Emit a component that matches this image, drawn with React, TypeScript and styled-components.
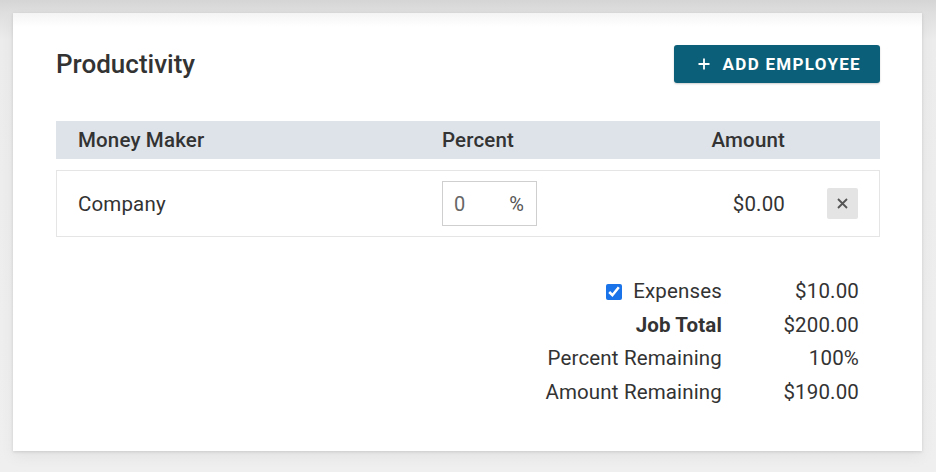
import React from "react";
import styled, { createGlobalStyle } from "styled-components";

const Global = createGlobalStyle`
  html, body { margin: 0; padding: 0; }
  body {
    font-family: Roboto, "Noto Sans", "Liberation Sans", sans-serif;
    background: linear-gradient(#d5d5d5 0px, #dedede 12px, #ececec 40px, #efefef 100%);
    min-height: 472px;
    color: #333;
  }
`;

const Page = styled.div`
  padding: 13px 14px 21px 13px;
`;

const Card = styled.section`
  background: #fff;
  box-shadow: 0 1px 3px rgba(0, 0, 0, 0.12), 0 6px 14px rgba(0, 0, 0, 0.05);
  padding: 32px 42px 42px 43px;
  height: 438px;
  box-sizing: border-box;
  background-image: linear-gradient(#f4f4f4 0px, #fff 14px);
`;

const TopBar = styled.div`
  display: flex;
  align-items: center;
  justify-content: space-between;
  height: 38px;
`;

const Title = styled.h2`
  margin: 0;
  font-size: 26px;
  font-weight: 500;
  color: #333;
`;

const AddButton = styled.button`
  display: flex;
  align-items: center;
  gap: 13px;
  height: 38px;
  padding: 0 19px 0 24px;
  border: none;
  border-radius: 3px;
  background: #0c5f78;
  color: #fff;
  font-family: Roboto, "Liberation Sans", sans-serif;
  font-size: 17px;
  font-weight: 700;
  letter-spacing: 1.3px;
  box-shadow: 0 1px 2px rgba(0, 0, 0, 0.2);
`;

const Grid = styled.div<{ $head?: boolean }>`
  display: grid;
  grid-template-columns: 364px 223px 120px 31px;
  column-gap: 0;
  align-items: center;
  ${(p) =>
    p.$head
      ? `
    margin-top: 38px;
    height: 38px;
    padding: 0 22px;
    background: #dee3ea;
    font-weight: 500;
  `
      : `
    margin-top: 11px;
    height: 67px;
    box-sizing: border-box;
    padding: 0 21px;
    border: 1px solid #e5e5e5;
  `}
  font-size: 20.5px;
  letter-spacing: 0.15px;
  & > :nth-child(4) { margin-left: 42px; }
`;

const Cell = styled.div<{ $right?: boolean }>`
  text-align: ${(p) => (p.$right ? "right" : "left")};
  white-space: nowrap;
`;

const PercentBox = styled.label`
  display: flex;
  align-items: center;
  justify-content: space-between;
  width: 95px;
  height: 45px;
  box-sizing: border-box;
  border: 1px solid #cfcfcf;
  padding: 0 12px 0 11px;
  font-size: 20px;
  color: #555;
`;

const PercentInput = styled.input`
  width: 40px;
  border: none;
  outline: none;
  padding: 0;
  font: inherit;
  color: #666;
  background: transparent;
`;

const RemoveButton = styled.button`
  width: 31px;
  height: 31px;
  border: none;
  border-radius: 2px;
  background: #e4e4e4;
  display: flex;
  align-items: center;
  justify-content: center;
  padding: 0;
`;

const Summary = styled.div`
  margin-top: 38px;
  display: grid;
  grid-template-columns: auto 137px;
  justify-content: end;
  padding-right: 21px;
  font-size: 20.5px;
  letter-spacing: 0.15px;
  line-height: 33.7px;
`;

const Label = styled.div<{ $bold?: boolean }>`
  display: flex;
  align-items: center;
  justify-content: flex-end;
  gap: 11px;
  font-weight: ${(p) => (p.$bold ? 700 : 400)};
`;

const Value = styled.div`
  text-align: right;
`;

const Check = styled.input`
  width: 16px;
  height: 16px;
  margin: 0;
  accent-color: #1a73e8;
`;

export default function App() {
  return (
    <>
      <Global />
      <Page>
        <Card>
          <TopBar>
            <Title>Productivity</Title>
            <AddButton>
              <svg width="12" height="12" viewBox="0 0 12 12">
                <path d="M6 0.5v11M0.5 6h11" stroke="#fff" strokeWidth="1.8" />
              </svg>
              ADD EMPLOYEE
            </AddButton>
          </TopBar>
          <Grid $head>
            <Cell>Money Maker</Cell>
            <Cell>Percent</Cell>
            <Cell $right>Amount</Cell>
            <Cell />
          </Grid>
          <Grid>
            <Cell>Company</Cell>
            <Cell>
              <PercentBox>
                <PercentInput defaultValue="0" />
                <span>%</span>
              </PercentBox>
            </Cell>
            <Cell $right>$0.00</Cell>
            <RemoveButton aria-label="remove">
              <svg width="11" height="11" viewBox="0 0 11 11">
                <path d="M1 1l9 9M10 1l-9 9" stroke="#555" strokeWidth="1.8" />
              </svg>
            </RemoveButton>
          </Grid>
          <Summary>
            <Label>
              <Check type="checkbox" defaultChecked />
              Expenses
            </Label>
            <Value>$10.00</Value>
            <Label $bold>Job Total</Label>
            <Value>$200.00</Value>
            <Label>Percent Remaining</Label>
            <Value>100%</Value>
            <Label>Amount Remaining</Label>
            <Value>$190.00</Value>
          </Summary>
        </Card>
      </Page>
    </>
  );
}
